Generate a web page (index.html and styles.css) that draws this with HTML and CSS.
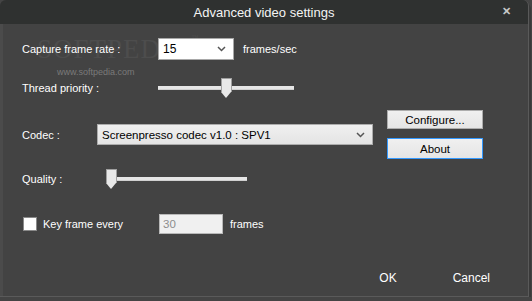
FILE: index.html
```html
<!DOCTYPE html>
<html lang="en">
<head>
    <meta charset="UTF-8">
    <title>Advanced video settings</title>
    <link rel="stylesheet" href="styles.css">
</head>
<body>
    <div class="window">
        <div class="titlebar">
            <span class="title">Advanced video settings</span>
            <span class="close">&#x2715;</span>
        </div>
        <div class="content">
            <div class="watermark">SOFTPEDIA<span class="tm">&trade;</span></div>
            <div class="watermark-url">www.softpedia.com</div>

            <div class="row row-rate">
                <label class="lbl lbl-rate">Capture frame rate :</label>
                <div class="select select-rate">
                    <span>15</span>
                    <svg class="chev" width="9" height="6" viewBox="0 0 9 6"><path d="M1 1 L4.5 4.5 L8 1" fill="none" stroke="#555" stroke-width="1.5"/></svg>
                </div>
                <span class="unit">frames/sec</span>
            </div>

            <div class="row row-thread">
                <label class="lbl lbl-rate">Thread priority :</label>
                <div class="slider slider-thread">
                    <div class="track"></div>
                    <div class="thumb" style="left: 63px"></div>
                </div>
            </div>

            <div class="row row-codec">
                <div class="codec-field">
                    <label class="lbl lbl-codec">Codec :</label>
                    <div class="select select-codec">
                        <span>Screenpresso codec v1.0 : SPV1</span>
                        <svg class="chev" width="9" height="6" viewBox="0 0 9 6"><path d="M1 1 L4.5 4.5 L8 1" fill="none" stroke="#555" stroke-width="1.5"/></svg>
                    </div>
                </div>
                <div class="btn-col">
                    <button class="btn">Configure...</button>
                    <button class="btn btn-focus">About</button>
                </div>
            </div>

            <div class="row row-quality">
                <label class="lbl lbl-quality">Quality :</label>
                <div class="slider slider-quality">
                    <div class="track"></div>
                    <div class="thumb" style="left: 0px"></div>
                </div>
            </div>

            <div class="row row-key">
                <span class="check"></span>
                <label class="lbl lbl-key">Key frame every</label>
                <input class="num" type="text" value="30" disabled>
                <span class="unit">frames</span>
            </div>

            <div class="footer">
                <span class="flat">OK</span>
                <span class="flat">Cancel</span>
            </div>
        </div>
    </div>
</body>
</html>
```

FILE: styles.css
```css
body {
    margin: 0;
    background-color: #444444;
    font-family: "Liberation Sans", Arial, sans-serif;
    font-size: 11px;
    color: #ffffff;
}
.window {
    width: 529px;
    height: 297px;
    background-color: #434343;
    border-right: 1px solid #5a5a5a;
    border-bottom: 1px solid #5a5a5a;
    box-shadow: 2px 3px 0 #3a3a3a;
    box-sizing: border-box;
    overflow: hidden;
    border-radius: 6px 6px 0 0;
}
.titlebar {
    height: 24px;
    background-color: #2f3130;
    display: flex;
    align-items: center;
    justify-content: center;
    position: relative;
}
.title {
    font-size: 13px;
    color: #f4f4f4;
}
.close {
    position: absolute;
    right: 17px;
    top: 5px;
    font-size: 11px;
    font-weight: bold;
    color: #c8c8c8;
}
.content {
    position: relative;
    height: 273px;
    border-left: 3px solid #4b4b4b;
    box-sizing: border-box;
    padding: 14px 0 0 19px;
}
.watermark {
    position: absolute;
    z-index: 0;
    left: 34px;
    top: 10px;
    font-family: "Liberation Serif", serif;
    font-size: 27px;
    letter-spacing: 1px;
    color: #4d4d4d;
}
.watermark .tm {
    font-size: 7px;
    vertical-align: top;
}
.watermark-url {
    position: absolute;
    z-index: 0;
    left: 54px;
    top: 43px;
    font-size: 9px;
    color: #7a7a7a;
}
.row {
    display: flex;
    align-items: center;
    position: relative;
    z-index: 1;
}
.lbl {
    flex: none;
}
.lbl-rate {
    width: 136px;
}
.lbl-codec {
    width: 75px;
}
.lbl-quality {
    width: 84px;
}
.row-rate {
    height: 22px;
}
.row-thread {
    height: 20px;
    margin-top: 18px;
}
.row-codec {
    align-items: flex-start;
    margin-top: 12px;
}
.codec-field {
    display: flex;
    align-items: center;
    margin-top: 14px;
}
.row-quality {
    height: 20px;
    margin-top: 10px;
}
.row-key {
    height: 20px;
    margin-top: 25px;
}
.select {
    display: flex;
    align-items: center;
    justify-content: space-between;
    box-sizing: border-box;
    height: 22px;
    border: 1px solid #a8a8a8;
    padding: 0 7px 0 4px;
    color: #000;
    font-size: 12px;
}
.select-rate {
    width: 76px;
    background-color: #ffffff;
}
.select-codec {
    width: 276px;
    height: 21px;
    background: linear-gradient(#f0f0f0, #e4e4e4);
    border-color: #acacac;
    font-size: 11.5px;
}
.unit {
    margin-left: 9px;
}
.slider {
    position: relative;
    height: 20px;
}
.slider-thread {
    width: 136px;
}
.slider-quality {
    width: 141px;
}
.track {
    position: absolute;
    left: 0;
    right: 0;
    top: 8px;
    height: 3px;
    background-color: #e6e6e6;
    border-bottom: 1px solid #d0d0d0;
}
.thumb {
    position: absolute;
    top: 0;
    width: 11px;
    height: 14px;
    background-color: #e8e8e8;
    border: 1px solid #a0a0a0;
    border-bottom: none;
    box-sizing: border-box;
}
.thumb::after {
    content: "";
    position: absolute;
    left: -1px;
    top: 13px;
    border-left: 5.5px solid transparent;
    border-right: 5.5px solid transparent;
    border-top: 6px solid #e8e8e8;
}
.btn-col {
    display: flex;
    flex-direction: column;
    gap: 9px;
    margin-left: 14px;
}
.btn {
    width: 96px;
    height: 19px;
    padding: 0;
    background: linear-gradient(#f0f0f0, #e5e5e5);
    border: 1px solid #adadad;
    font-family: "Liberation Sans", Arial, sans-serif;
    font-size: 11.5px;
    color: #000;
}
.btn-focus {
    height: 21px;
    border: 1px solid #3399ff;
}
.check {
    width: 12px;
    height: 12px;
    background-color: #ffffff;
    border: 1px solid #8a8a8a;
    margin-left: 1px;
    margin-right: 6px;
    flex: none;
}
.lbl-key {
    width: 116px;
}
.num {
    width: 64px;
    height: 20px;
    box-sizing: border-box;
    background-color: #f0f0f0;
    border: 1px solid #b8b8b8;
    color: #8d8d8d;
    font-family: "Liberation Sans", Arial, sans-serif;
    font-size: 11.5px;
    padding: 0 3px;
    margin: 0;
}
.row-key .unit {
    margin-left: 7px;
}
.footer {
    display: flex;
    justify-content: flex-end;
    gap: 56px;
    margin-top: 37px;
    padding-right: 38px;
    font-size: 12px;
}
```
